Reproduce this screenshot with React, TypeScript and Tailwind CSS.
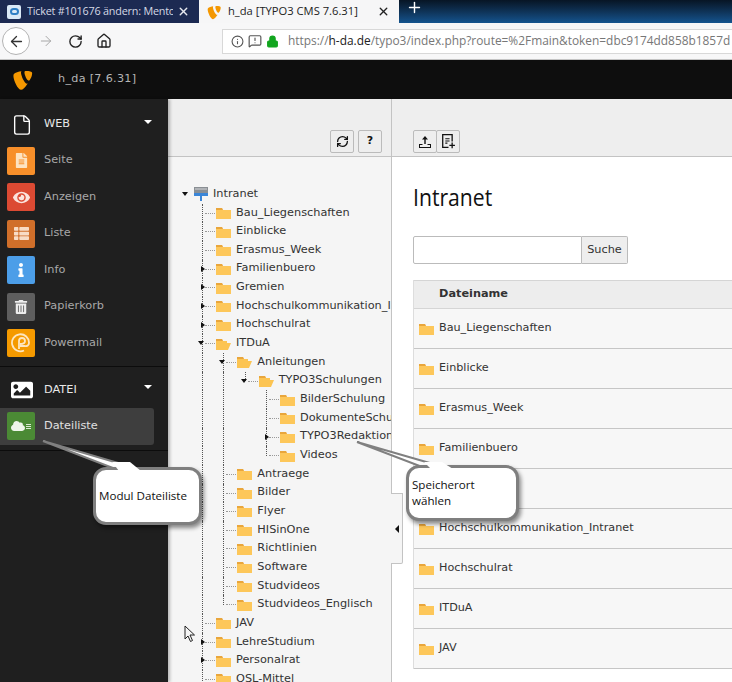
import { ReactNode } from "react"
import { ArrowLeft, ArrowRight, RotateCw, RefreshCw, House, Info, Lock, X, Plus, File, MessageSquareWarning } from "lucide-react"
import { FaEye, FaInfo, FaTrashAlt, FaFileAlt, FaThList, FaCloud, FaImage } from "react-icons/fa"

type TreeRow = {
  name: string
  guides: boolean[]
  toggle?: "open" | "closed"
  open?: boolean
  last?: boolean
}

const treeRows: TreeRow[] = [
  { name: "Bau_Liegenschaften", guides: [] },
  { name: "Einblicke", guides: [] },
  { name: "Erasmus_Week", guides: [] },
  { name: "Familienbuero", guides: [], toggle: "closed" },
  { name: "Gremien", guides: [], toggle: "closed" },
  { name: "Hochschulkommunikation_Intranet", guides: [], toggle: "closed" },
  { name: "Hochschulrat", guides: [], toggle: "closed" },
  { name: "ITDuA", guides: [], toggle: "open", open: true },
  { name: "Anleitungen", guides: [true], toggle: "open", open: true },
  { name: "TYPO3Schulungen", guides: [true, true], toggle: "open", open: true, last: true },
  { name: "BilderSchulung", guides: [true, true, false] },
  { name: "DokumenteSchulung", guides: [true, true, false] },
  { name: "TYPO3Redaktion", guides: [true, true, false], toggle: "closed" },
  { name: "Videos", guides: [true, true, false], last: true },
  { name: "Antraege", guides: [true] },
  { name: "Bilder", guides: [true] },
  { name: "Flyer", guides: [true] },
  { name: "HISinOne", guides: [true] },
  { name: "Richtlinien", guides: [true] },
  { name: "Software", guides: [true] },
  { name: "Studvideos", guides: [true] },
  { name: "Studvideos_Englisch", guides: [true], last: true },
  { name: "JAV", guides: [] },
  { name: "LehreStudium", guides: [], toggle: "closed" },
  { name: "Personalrat", guides: [], toggle: "closed" },
  { name: "QSL-Mittel", guides: [] },
]

const files = [
  "Bau_Liegenschaften",
  "Einblicke",
  "Erasmus_Week",
  "Familienbuero",
  "Gremien",
  "Hochschulkommunikation_Intranet",
  "Hochschulrat",
  "ITDuA",
  "JAV",
]

function Typo3Logo({ className }: { className: string }) {
  return (
    <svg viewBox="0 0 20 20" className={className} fill="#f49700">
      <path d="M14.5 13.5c-.3.1-.5.1-.8.1-2 0-5-7-5-9.4 0-.9.2-1.2.5-1.4C6.7 3 3.5 4 2.5 5.3c-.2.3-.4.9-.4 1.6C2.1 10.6 6 19 8.8 19c1.3 0 3.5-2.1 5.7-5.5z" />
      <path d="M13.2 2.5c2.6 0 5.2.4 5.2 1.9 0 3-1.9 6.6-2.9 6.6-1.7 0-3.8-4.8-3.8-7.2 0-1.1.4-1.3 1.5-1.3z" />
    </svg>
  )
}

function Folder({ open }: { open?: boolean }) {
  return (
    <svg viewBox="0 0 15 12" className="w-[15px] h-[12px] shrink-0">
      <path d="M0 1h6l1 1.5V4H0z" fill="#e9a63c" />
      {open ? (
        <path d="M0 3h11v2h4l-3 7H0z" fill="#fcc452" />
      ) : (
        <path d="M0 3h15v9H0z" fill="#fdc75a" />
      )}
    </svg>
  )
}

function Caret({ open }: { open?: boolean }) {
  return open ? (
    <span className="absolute left-[-4px] top-[7px] w-0 h-0 border-x-[3.5px] border-x-transparent border-t-[4px] border-t-[#111]" />
  ) : (
    <span className="absolute left-[-1px] top-[6px] w-0 h-0 border-y-[3.5px] border-y-transparent border-l-[4px] border-l-[#111]" />
  )
}

function Tree() {
  return (
    <div className="pl-[13px] pt-[28px] text-[11.3px] text-[#333]">
      <div className="flex items-center h-[18.67px]">
        <span className="w-0 h-0 ml-[1px] border-x-[3.5px] border-x-transparent border-t-[4px] border-t-[#111]" />
        <svg viewBox="0 0 14 14" className="w-[14px] h-[14px] ml-[6px]">
          <rect x="0" y="0" width="14" height="6" fill="#8a8f94" />
          <rect x="1" y="1.5" width="12" height="1" fill="#d5d8da" />
          <rect x="0" y="6" width="14" height="3" fill="#3a86d8" />
          <rect x="6" y="9" width="2" height="5" fill="#3a86d8" />
        </svg>
        <span className="ml-[5px]">Intranet</span>
      </div>
      <div className="pl-[21px]">
        {treeRows.map((row) => (
          <div key={row.name} className="flex items-center h-[18.67px] whitespace-nowrap">
            {row.guides.map((on, i) => (
              <div key={i} className={on ? "w-[21.33px] h-full shrink-0 border-l border-dotted border-[#555]" : "w-[21.33px] h-full shrink-0"} />
            ))}
            <div className="relative w-[14px] h-full shrink-0">
              <div className={row.last ? "absolute left-0 top-0 h-1/2 border-l border-dotted border-[#555]" : "absolute left-0 top-0 h-full border-l border-dotted border-[#555]"} />
              <div className="absolute left-[3px] right-[1px] top-[9px] border-t border-dotted border-[#999]" />
              {row.toggle && <Caret open={row.toggle === "open"} />}
            </div>
            <Folder open={row.open} />
            <span className="ml-[5px]">{row.name}</span>
          </div>
        ))}
      </div>
    </div>
  )
}

function ToolButton({ children }: { children: ReactNode }) {
  return (
    <div className="flex items-center justify-center w-[24px] h-[23px] bg-[#eeeeee] border border-[#bbbbbb] rounded-[2px] text-[#111]">
      {children}
    </div>
  )
}

function SideItem({ label, color, active, children }: { label: string; color: string; active?: boolean; children: ReactNode }) {
  return (
    <div className={active ? "flex items-center h-[36.5px] w-[154px] pl-[7px] bg-[#3e3e3e] rounded-r-[3px]" : "flex items-center h-[36.5px] pl-[7px]"}>
      <div className={"flex items-center justify-center w-[28px] h-[28px] rounded-[2px] text-white " + color}>
        {children}
      </div>
      <span className={active ? "ml-[9px] text-[11.3px] text-[#e0e0e0]" : "ml-[9px] text-[11.3px] text-[#a8a8a8]"}>{label}</span>
    </div>
  )
}

function SideHeader({ label, children }: { label: string; children: ReactNode }) {
  return (
    <div className="flex items-center h-[35.5px] pl-[11px] pr-[16px]">
      <div className="w-[22px] flex justify-center text-white">{children}</div>
      <span className="ml-[11px] text-[11.3px] text-[#e8e8e8]">{label}</span>
      <span className="ml-auto mb-[6px] w-0 h-0 border-x-[4px] border-x-transparent border-t-[4px] border-t-white" />
    </div>
  )
}

function Sidebar() {
  return (
    <aside className="w-[168px] shrink-0 bg-[#1f1f1f] shadow-[2px_0_3px_rgba(0,0,0,0.25)] z-10">
      <div className="pt-[8px]">
        <SideHeader label="WEB">
          <File size={22} strokeWidth={1.5} />
        </SideHeader>
      </div>
      <SideItem label="Seite" color="bg-[#f78f2a]"><FaFileAlt size={15} color="#fde3c2" /></SideItem>
      <SideItem label="Anzeigen" color="bg-[#dc4a33]"><FaEye size={17} color="#fbe3dd" /></SideItem>
      <SideItem label="Liste" color="bg-[#d06f2a]"><FaThList size={15} color="#f8dcc5" /></SideItem>
      <SideItem label="Info" color="bg-[#4c9ee8]"><FaInfo size={14} /></SideItem>
      <SideItem label="Papierkorb" color="bg-[#5e5e5e]"><FaTrashAlt size={14} color="#eeeeee" /></SideItem>
      <SideItem label="Powermail" color="bg-[#f59a00]">
        <svg viewBox="0 0 20 20" className="w-[20px] h-[20px]" fill="none" stroke="#fde6c0" strokeWidth="1.8">
          <path d="M13 17.5A8.5 8.5 0 1 1 18 10c0 2-2 3.5-4 3H9" />
          <path d="M8 16V8a3 3 0 0 1 6 0c0 2-2 3-5 3" />
        </svg>
      </SideItem>
      <div className="mt-[4px] border-t border-[#0c0c0c] pt-[6px]">
        <SideHeader label="DATEI">
          <FaImage size={22} />
        </SideHeader>
      </div>
      <SideItem label="Dateiliste" color="bg-[#4b8a35]" active>
        <FaCloud size={14} color="#eef5ea" />
        <span className="ml-[1px] flex flex-col gap-[1px]">
          <span className="block w-[5px] h-[1px] bg-[#dce9d5]" />
          <span className="block w-[5px] h-[1px] bg-[#dce9d5]" />
          <span className="block w-[5px] h-[1px] bg-[#dce9d5]" />
        </span>
      </SideItem>
      <div className="mt-[5px] border-t border-[#0c0c0c]" />
    </aside>
  )
}

export default function App() {
  return (
    <div className="relative w-[732px] h-[682px] overflow-hidden bg-white font-['DejaVu_Sans',sans-serif]">
      {/* browser tabs */}
      <div className="flex h-[23px] bg-[#1c2a52] font-['Open_Sans',sans-serif] text-[11.2px]">
        <div className="flex items-center w-[199px] pl-[7px] text-[#d5d9e4]">
          <div className="flex items-center justify-center w-[14px] h-[14px] bg-[#d9e8f6] rounded-[2px]">
            <div className="w-[9px] h-[7px] rounded-full border-2 border-[#2f7fc4]" />
          </div>
          <span className="ml-[6px] w-[146px] overflow-hidden whitespace-nowrap text-[10.8px] tracking-[-0.2px]">Ticket #101676 ändern: Mentor</span>
          <X size={13} className="ml-[4px]" color="#e8eaf0" strokeWidth={2.5} />
        </div>
        <div className="flex items-center w-[200px] pl-[7px] bg-[#f6f6f7] text-[#222]">
          <Typo3Logo className="w-[16px] h-[16px]" />
          <span className="ml-[6px] whitespace-nowrap">h_da [TYPO3 CMS 7.6.31]</span>
          <X size={13} className="ml-auto mr-[9px]" color="#222" strokeWidth={2.5} />
        </div>
        <div className="flex-1 pl-[7px] bg-gradient-to-b from-[#071525] to-[#14548f]">
          <Plus size={17} color="#fff" strokeWidth={2} className="-mt-[1px]" />
        </div>
      </div>

      {/* browser toolbar */}
      <div className="flex items-center h-[37px] bg-[#f7f7f8] border-b border-[#c4c4c4] pl-[2px]">
        <div className="flex items-center justify-center w-[28px] h-[28px] rounded-full border border-[#b3b3b3] bg-white">
          <ArrowLeft size={17} color="#333" strokeWidth={1.8} />
        </div>
        <ArrowRight size={16} color="#a8a8a8" strokeWidth={1.5} className="ml-[8px]" />
        <RotateCw size={15} color="#222" strokeWidth={2.2} className="ml-[14px]" />
        <House size={16} color="#222" strokeWidth={2} className="ml-[13px]" />
        <div className="flex items-center ml-[110px] flex-1 h-[25px] bg-white border border-[#d8d8d8] border-r-0 pl-[8px] overflow-hidden whitespace-nowrap font-['Open_Sans',sans-serif] text-[11.9px] text-[#777]">
          <Info size={13} color="#555" className="shrink-0" />
          <MessageSquareWarning size={14} color="#555" className="ml-[4px] shrink-0" />
          <Lock size={13} color="#12a51f" fill="#12a51f" className="ml-[3.5px] shrink-0" />
          <span className="ml-[9.5px]">https://<span className="text-[#222]">h-da.de</span>/typo3/index.php?route=%2Fmain&token=dbc9174dd858b1857d</span>
        </div>
      </div>

      {/* typo3 topbar */}
      <div className="flex items-center h-[39px] bg-[#0e0e0e] pl-[11px]">
        <Typo3Logo className="w-[23px] h-[23px]" />
        <span className="ml-[24px] text-[11.2px] text-[#b5b5b5] tracking-[0.3px]">h_da [7.6.31]</span>
      </div>

      <div className="flex h-[583px]">
        <Sidebar />

        {/* folder tree */}
        <section className="w-[224px] shrink-0 bg-[#f5f5f5] border-r border-[#c3c3c3] overflow-hidden">
          <div className="flex justify-end items-end gap-[4px] h-[58px] pr-[9px] pb-[3px] bg-[#eeeeee] border-b border-[#c3c3c3]">
            <ToolButton><RefreshCw size={13} strokeWidth={2.4} /></ToolButton>
            <ToolButton><span className="text-[11px] font-bold">?</span></ToolButton>
          </div>
          <Tree />
        </section>

        {/* file list */}
        <main className="flex-1 min-w-0">
          <div className="flex items-end h-[58px] pl-[21px] pb-[3px] bg-[#eeeeee] border-b border-[#c3c3c3]">
            <div className="flex">
              <ToolButton>
                <svg viewBox="0 0 14 14" className="w-[14px] h-[14px]" fill="#111">
                  <path d="M7 1l3 3.500H7.700V9H6.300V4.500H4z" />
                  <path d="M1 9h3.500v1H2v2h10v-2H9.500V9H13v4H1z" />
                </svg>
              </ToolButton>
              <div className="-ml-[1px]">
                <ToolButton>
                  <svg viewBox="0 0 14 14" className="w-[15px] h-[15px]" fill="#111">
                    <path d="M1 0h10v7H9.800V1.200H2.200v10.600H7V13H1z" />
                    <path d="M4 4h4v1H4zM4 6h4v1H4zM4 8h2v1H4z" />
                    <path d="M9.800 8H11v2h2v1.200h-2v2H9.800v-2h-2V10h2z" />
                  </svg>
                </ToolButton>
              </div>
            </div>
          </div>
          <div className="pl-[21px]">
            <h1 className="mt-[24px] h-[32px] font-['Open_Sans',sans-serif] text-[23px] leading-[32px] text-[#111] scale-x-[0.92] origin-left">Intranet</h1>
            <div className="flex mt-[23px] h-[28px] w-[215px] text-[11.3px]">
              <div className="flex-1 bg-white border border-[#bbbbbb] rounded-l-[2px]" />
              <div className="flex items-center justify-center w-[46px] bg-[#eeeeee] border border-l-0 border-[#bbbbbb] rounded-r-[2px] text-[#333]">Suche</div>
            </div>
            <div className="mt-[16px] border-l border-[#dddddd]">
              <div className="flex items-center h-[29px] pl-[25px] bg-[#ededed] border-y border-[#d5d5d5] text-[11.3px] font-bold text-[#333]">
                Dateiname
              </div>
              {files.map((name) => (
                <div key={name} className="flex items-center h-[40px] pl-[5px] bg-[#f7f7f7] border-b border-[#c6c6c6] text-[11.2px] text-[#333] whitespace-nowrap">
                  <Folder />
                  <span className="ml-[5px]">{name}</span>
                </div>
              ))}
            </div>
          </div>
        </main>
      </div>

      {/* tree collapse handle */}
      <div className="absolute left-[391px] top-[493px] w-[12px] h-[71px] bg-[#f5f5f5] border border-l-0 border-[#c3c3c3] rounded-br-[2px] flex items-center justify-center">
        <span className="w-0 h-0 border-y-[4px] border-y-transparent border-r-[4px] border-r-[#111]" />
      </div>

      {/* callouts */}
      <svg viewBox="0 0 732 682" className="absolute inset-0 z-20 w-[732px] h-[682px] pointer-events-none">
        <path d="M43 441L118 470L142 470Z" fill="#ffffff" stroke="#808080" strokeWidth="2" />
        <path d="M357 442L430 470L454 470Z" fill="#ffffff" stroke="#808080" strokeWidth="2" />
      </svg>
      <div className="absolute z-20 left-[93px] top-[467px] w-[109px] h-[58px] bg-white border-[3px] border-[#7f7f7f] rounded-[13px] shadow-[2px_3px_4px_rgba(0,0,0,0.45)] flex items-center pl-[3px] font-['Open_Sans',sans-serif] text-[11.6px] text-[#111] whitespace-nowrap">
        Modul Dateiliste
      </div>
      <div className="absolute z-20 left-[406px] top-[465px] w-[113px] h-[56px] bg-white border-[3px] border-[#7f7f7f] rounded-[13px] shadow-[2px_3px_4px_rgba(0,0,0,0.45)] pl-[3px] pt-[9px] font-['Open_Sans',sans-serif] text-[11.6px] leading-[16px] text-[#111]">
        Speicherort<br />wählen
      </div>

      {/* tail tops, over the callout borders */}
      <svg viewBox="0 0 732 682" className="absolute inset-0 z-20 w-[732px] h-[682px] pointer-events-none">
        <path d="M112 462L119 471L141 471L130 462Z" fill="#ffffff" />
        <path d="M424 462L431 469L453 469L442 462Z" fill="#ffffff" />
      </svg>

      {/* mouse pointer */}
      <svg viewBox="0 0 12 18" className="absolute left-[184px] top-[625px] w-[12px] h-[18px]">
        <path d="M1 1v13l3-3 2.500 5.500 2-1L6 10h4.500z" fill="#f5f5f5" stroke="#222" strokeWidth="1" />
      </svg>
    </div>
  )
}
